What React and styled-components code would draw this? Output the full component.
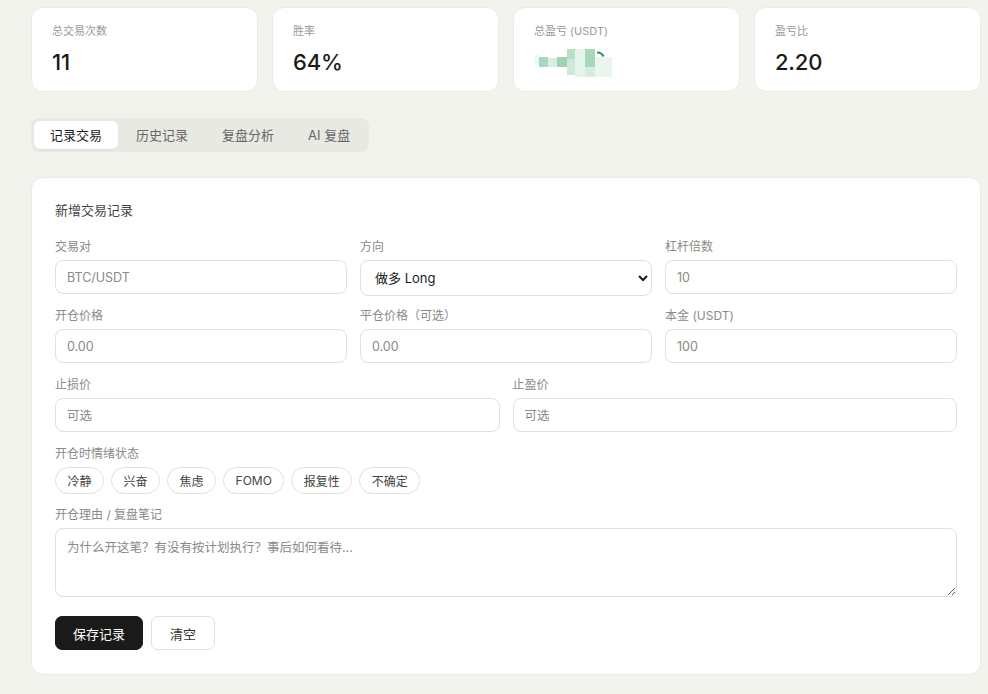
import React from "react";
import styled, { createGlobalStyle } from "styled-components";

const Global = createGlobalStyle`
  * { box-sizing: border-box; }
  html, body { margin: 0; padding: 0; background: #f3f3ee; }
  body {
    font-family: Inter, "Noto Sans CJK SC", "Noto Sans", sans-serif;
    color: #1a1a1a;
  }
`;

const Page = styled.div`
  width: 988px;
  height: 694px;
  padding: 7px 7px 0 31px;
  overflow: hidden;
`;

const Stats = styled.div`
  display: grid;
  grid-template-columns: repeat(4, 1fr);
  gap: 14px;
`;

const StatCard = styled.div`
  background: #fff;
  border: 1px solid #ebebe6;
  border-radius: 12px;
  padding: 15px 20px 15px;
  height: 85px;
`;

const StatLabel = styled.div`
  font-size: 11px;
  line-height: 16px;
  color: #9a9a96;
`;

const StatValue = styled.div`
  margin-top: 9px;
  font-size: 22px;
  line-height: 28px;
  font-weight: 500;
  color: #1a1a1a;
  letter-spacing: -0.2px;
`;

const Mosaic = styled.svg`
  display: block;
  margin-top: 6px;
  margin-left: 1px;
`;

const Tabs = styled.div`
  display: inline-flex;
  gap: 2px;
  margin-top: 26px;
  padding: 3px;
  background: #e9e9e4;
  border-radius: 8px;
`;

const Tab = styled.button`
  border: none;
  font-family: inherit;
  font-size: 13px;
  line-height: 28px;
  height: 28px;
  padding: 0 16px;
  border-radius: 6px;
  cursor: pointer;
  background: ${(p) => (p.$active ? "#fff" : "transparent")};
  color: ${(p) => (p.$active ? "#1a1a1a" : "#666662")};
  box-shadow: ${(p) => (p.$active ? "0 1px 2px rgba(0,0,0,0.06)" : "none")};
`;

const FormCard = styled.div`
  margin-top: 25px;
  width: 950px;
  background: #fff;
  border: 1px solid #ebebe6;
  border-radius: 12px;
  padding: 23px 23px 24px;
`;

const Title = styled.div`
  font-size: 13px;
  line-height: 18px;
  color: #444440;
  margin-bottom: 20px;
`;

const Grid = styled.div`
  display: grid;
  grid-template-columns: repeat(${(p) => p.$cols}, 1fr);
  column-gap: 13px;
  margin-bottom: 14px;
`;

const Field = styled.div`
  display: flex;
  flex-direction: column;
  gap: 5px;
  margin-bottom: ${(p) => p.$mb || 0}px;
`;

const Label = styled.label`
  font-size: 12px;
  line-height: 16px;
  color: #8a8a86;
`;

const Input = styled.input`
  height: 34px;
  border: 1px solid #e0e0dc;
  border-radius: 8px;
  padding: 0 11px;
  font-family: inherit;
  font-size: 12.5px;
  color: #1a1a1a;
  background: #fff;
  outline: none;
  &::placeholder { color: #8a8a86; }
`;

const Select = styled.select`
  height: 36px;
  margin-bottom: -2px;
  border: 1px solid #e0e0dc;
  border-radius: 8px;
  padding: 0 10px;
  font-family: inherit;
  font-size: 13px;
  color: #1a1a1a;
  background: #fff;
  outline: none;
`;

const Chips = styled.div`
  display: flex;
  gap: 7px;
`;

const Chip = styled.button`
  height: 27px;
  padding: 0 11.5px;
  border: 1px solid #e0e0dc;
  border-radius: 999px;
  background: #fff;
  font-family: inherit;
  font-size: 12px;
  color: #444440;
  cursor: pointer;
`;

const TextArea = styled.textarea`
  height: 69px;
  border: 1px solid #e0e0dc;
  border-radius: 8px;
  padding: 10px 11px;
  font-family: inherit;
  font-size: 12.5px;
  line-height: 18px;
  color: #1a1a1a;
  resize: vertical;
  outline: none;
  &::placeholder { color: #8a8a86; }
`;

const Actions = styled.div`
  display: flex;
  gap: 8px;
  margin-top: 19px;
`;

const Button = styled.button`
  height: 34px;
  padding: 0 ${(p) => (p.$primary ? 17 : 18)}px;
  border-radius: 7px;
  font-family: inherit;
  font-size: 13px;
  cursor: pointer;
  border: 1px solid ${(p) => (p.$primary ? "#1a1a1a" : "#e0e0dc")};
  background: ${(p) => (p.$primary ? "#1a1a1a" : "#fff")};
  color: ${(p) => (p.$primary ? "#fff" : "#333330")};
`;

// pixelated (censored) total P&L value, coordinates relative to its box
const mosaicCells = [
  [0, 10, 4, 10, "#eef8f2"],
  [4, 12, 9, 10, "#a8d8bd"],
  [13, 13, 9, 9, "#d8eee1"],
  [22, 12, 10, 10, "#9fd3b5"],
  [32, 4, 8, 10, "#b5dfc7"],
  [32, 14, 8, 16, "#cde9d9"],
  [40, 4, 10, 28, "#e6f5ec"],
  [50, 4, 10, 18, "#a7d8bb"],
  [50, 22, 10, 10, "#d6eedf"],
  [60, 12, 17, 20, "#e9f6ef"],
];

export default function App() {
  const emotions = ["冷静", "兴奋", "焦虑", "FOMO", "报复性", "不确定"];
  return (
    <>
      <Global />
      <Page>
        <Stats>
          <StatCard>
            <StatLabel>总交易次数</StatLabel>
            <StatValue>11</StatValue>
          </StatCard>
          <StatCard>
            <StatLabel>胜率</StatLabel>
            <StatValue>64%</StatValue>
          </StatCard>
          <StatCard>
            <StatLabel>总盈亏 (USDT)</StatLabel>
            <Mosaic width="80" height="34" viewBox="0 0 80 34">
              {mosaicCells.map(([x, y, w, h, c], i) => (
                <rect key={i} x={x} y={y} width={w} height={h} fill={c} />
              ))}
              <path d="M62 7.5 q5 0 6.5 4" stroke="#2e8f5f" strokeWidth="2.2" fill="none" />
            </Mosaic>
          </StatCard>
          <StatCard>
            <StatLabel>盈亏比</StatLabel>
            <StatValue>2.20</StatValue>
          </StatCard>
        </Stats>

        <Tabs>
          <Tab $active>记录交易</Tab>
          <Tab>历史记录</Tab>
          <Tab>复盘分析</Tab>
          <Tab>AI 复盘</Tab>
        </Tabs>

        <FormCard>
          <Title>新增交易记录</Title>
          <Grid $cols={3}>
            <Field>
              <Label>交易对</Label>
              <Input placeholder="BTC/USDT" />
            </Field>
            <Field>
              <Label>方向</Label>
              <Select defaultValue="long">
                <option value="long">做多 Long</option>
                <option value="short">做空 Short</option>
              </Select>
            </Field>
            <Field>
              <Label>杠杆倍数</Label>
              <Input placeholder="10" />
            </Field>
          </Grid>
          <Grid $cols={3}>
            <Field>
              <Label>开仓价格</Label>
              <Input placeholder="0.00" />
            </Field>
            <Field>
              <Label>平仓价格（可选）</Label>
              <Input placeholder="0.00" />
            </Field>
            <Field>
              <Label>本金 (USDT)</Label>
              <Input placeholder="100" />
            </Field>
          </Grid>
          <Grid $cols={2}>
            <Field>
              <Label>止损价</Label>
              <Input placeholder="可选" />
            </Field>
            <Field>
              <Label>止盈价</Label>
              <Input placeholder="可选" />
            </Field>
          </Grid>
          <Field $mb={13}>
            <Label>开仓时情绪状态</Label>
            <Chips>
              {emotions.map((e) => (
                <Chip key={e}>{e}</Chip>
              ))}
            </Chips>
          </Field>
          <Field>
            <Label>开仓理由 / 复盘笔记</Label>
            <TextArea placeholder="为什么开这笔？有没有按计划执行？事后如何看待..." />
          </Field>
          <Actions>
            <Button $primary>保存记录</Button>
            <Button>清空</Button>
          </Actions>
        </FormCard>
      </Page>
    </>
  );
}
